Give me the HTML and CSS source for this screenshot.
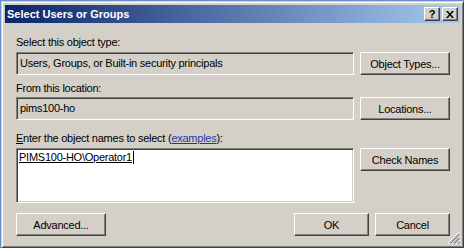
FILE: index.html
```html
<!DOCTYPE html>
<html>
<head>
<meta charset="utf-8">
<link rel="stylesheet" href="styles.css">
</head>
<body>
<div class="window">
  <div class="titlebar">
    <span class="title">Select Users or Groups</span>
    <div class="tbtns">
      <span class="tbtn help">?</span>
      <span class="tbtn close"><svg width="8" height="7" viewBox="0 0 8 7"><path d="M0 0h2l2 2.5 2-2.5h2L5 3.5 8 7H6L4 4.5 2 7H0l3-3.5z" fill="#000"/></svg></span>
    </div>
  </div>
  <div class="body">
    <div class="grid">
      <div class="label l1">Select this object type:</div>
      <div class="field">Users, Groups, or Built-in security principals</div>
      <div class="btn">Object Types...</div>
      <div class="label l2">From this location:</div>
      <div class="field">pims100-ho</div>
      <div class="btn">Locations...</div>
      <div class="label l3"><u>E</u>nter the object names to select (<a class="link">examples</a>):</div>
      <div class="textarea"><span class="name">PIMS100-HO\Operator1</span><span class="caret"></span></div>
      <div class="btn top">Check Names</div>
    </div>
    <div class="actions">
      <div class="btn wide">Advanced...</div>
      <div class="spacer"></div>
      <div class="btn">OK</div>
      <div class="btn">Cancel</div>
    </div>
  </div>
  <svg class="grip" width="12" height="12" viewBox="0 0 12 12">
    <path d="M11 0L0 11M12 1L1 12" stroke="#fff" stroke-width="1"/>
    <path d="M11 1.5L1.5 11M11.5 2.5L2.5 11.5" stroke="#808080"/>
    <path d="M12 4L4 12" stroke="#fff"/>
    <path d="M11 5.5L5.5 11M11.5 6.5L6.5 11.5" stroke="#808080"/>
    <path d="M12 8L8 12" stroke="#fff"/>
    <path d="M11 9.5L9.5 11M11.5 10.5L10.5 11.5" stroke="#808080"/>
  </svg>
</div>
</body>
</html>
```

FILE: styles.css
```css
* { box-sizing: border-box; }
html, body { margin: 0; padding: 0; }
body {
  width: 464px;
  height: 248px;
  background: #6c8fc9;
  font-family: "Liberation Sans", Arial, sans-serif;
  font-size: 11px;
  letter-spacing: -0.25px;
  color: #000;
  overflow: hidden;
}
.window {
  position: relative;
  margin: 1px 0 0 1px;
  width: 463px;
  height: 247px;
  background: #d4d0c8;
  border: 1px solid;
  border-color: #d4d0c8 #404040 #404040 #d4d0c8;
  box-shadow: inset 1px 1px #fff, inset -1px -1px #808080;
  padding: 3px;
  display: flex;
  flex-direction: column;
}
.titlebar {
  height: 18px;
  background: linear-gradient(to right, #0a246a, #a6caf0);
  display: flex;
  align-items: center;
  padding-left: 2px;
}
.title {
  color: #fff;
  font-weight: bold;
  font-size: 11px;
  letter-spacing: 0;
  flex: 1;
  line-height: 18px;
}
.tbtns {
  display: flex;
  gap: 2px;
  padding-right: 2px;
}
.tbtn {
  width: 16px;
  height: 14px;
  background: #d4d0c8;
  border: 1px solid;
  border-color: #fff #404040 #404040 #fff;
  box-shadow: inset -1px -1px #808080;
  display: flex;
  align-items: center;
  justify-content: center;
  font-weight: bold;
  font-size: 11px;
  line-height: 12px;
}
.body {
  padding: 13px 10px 0 11px;
  flex: 1;
}
.grid {
  display: grid;
  grid-template-columns: 338px 90px;
  column-gap: 6px;
  align-items: start;
}
.label {
  grid-column: 1 / 3;
  line-height: 13px;
  height: 13px;
  white-space: nowrap;
}
.l1 { margin-bottom: 3px; }
.l2 { margin-top: 7px; margin-bottom: 2px; }
.l3 { margin-top: 12px; margin-bottom: 3px; }
.link { color: #1f3aa6; text-decoration: underline; }
.field {
  height: 23px;
  border: 1px solid;
  border-color: #808080 #fff #fff #808080;
  box-shadow: inset 1px 1px #404040, inset -1px -1px #d4d0c8;
  padding: 0 3px;
  line-height: 21px;
  white-space: nowrap;
}
.btn {
  height: 23px;
  background: #d4d0c8;
  border: 1px solid;
  border-color: #fff #404040 #404040 #fff;
  box-shadow: inset -1px -1px #808080;
  display: flex;
  align-items: center;
  justify-content: center;
  white-space: nowrap;
  width: 90px;
}
.textarea {
  height: 55px;
  background: #fff;
  border: 1px solid;
  border-color: #808080 #fff #fff #808080;
  box-shadow: inset 1px 1px #404040, inset -1px -1px #d4d0c8;
  padding: 2px 2px 0 2px;
  line-height: 13px;
  display: flex;
  align-items: flex-start;
}
.name { text-decoration: underline; }
.caret {
  width: 1px;
  height: 13px;
  background: #000;
  margin-left: 1px;
}
.actions {
  display: flex;
  gap: 6px;
  margin-top: 10px;
}
.actions .btn { width: 75px; }
.actions .btn.wide { width: 90px; }
.spacer { flex: 1; }
.grip {
  position: absolute;
  right: 3px;
  bottom: 3px;
}
```
